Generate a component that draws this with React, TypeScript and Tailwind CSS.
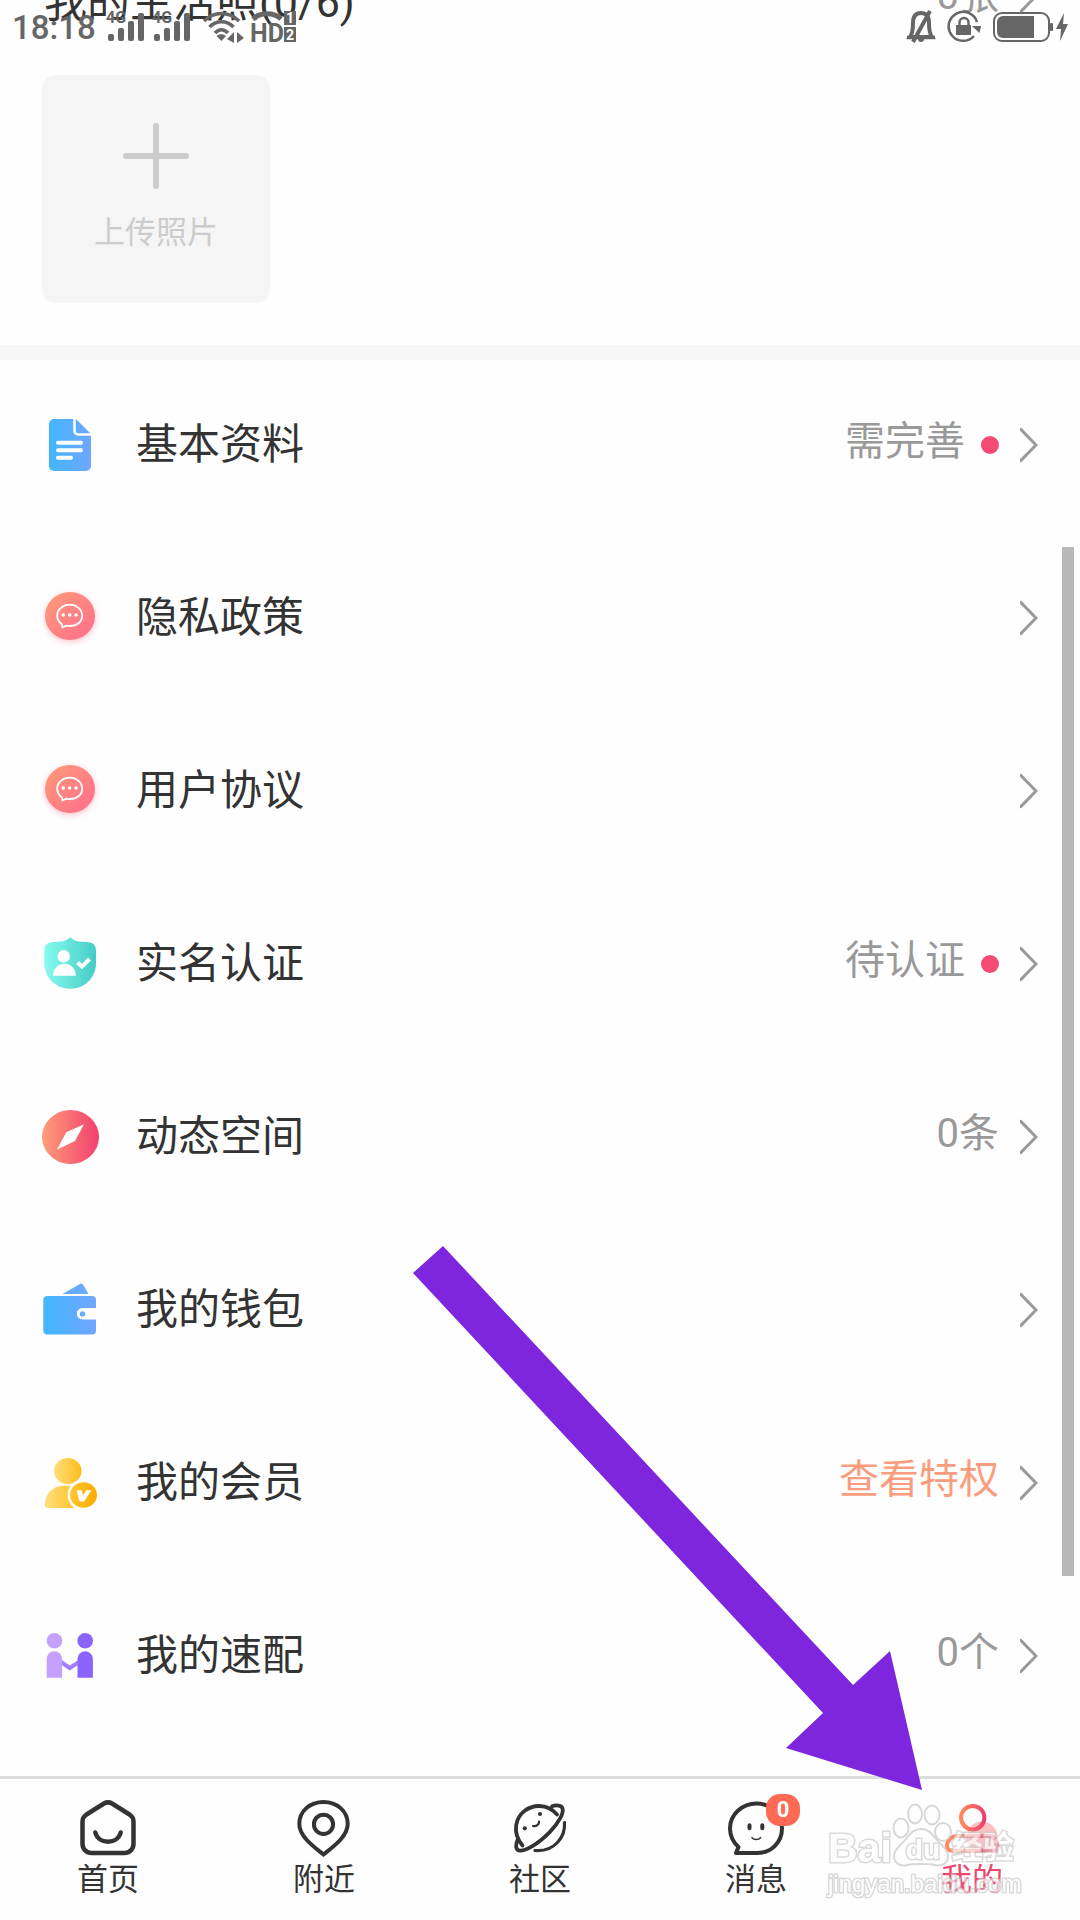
import type { ReactNode } from "react"

// ── Types ──────────────────────────────────────────────────────────────────
interface MenuItem {
  label: string
  icon: ReactNode
  value?: string
  dot?: boolean
  highlight?: boolean
}

interface TabItem {
  label: string
  icon: ReactNode
  badge?: number
  active?: boolean
}

function Gradient({ id, from, to, diagonal }: { id: string; from: string; to: string; diagonal?: boolean }) {
  return (
    <defs>
      <linearGradient id={id} x1="0" y1="0" x2="1" y2={diagonal ? "1" : "0"}>
        <stop offset="0" stopColor={from} />
        <stop offset="1" stopColor={to} />
      </linearGradient>
    </defs>
  )
}

// ── Menu icons ─────────────────────────────────────────────────────────────
function MenuSvg({ children }: { children: ReactNode }) {
  return (
    <svg viewBox="0 0 56 56" className="size-14 shrink-0 overflow-visible" fill="none" aria-hidden="true">
      {children}
    </svg>
  )
}

function DocIcon() {
  return (
    <MenuSvg>
      <Gradient id="doc" from="#41b7ff" to="#70a6ff" />
      <path d="M12 2H34L49 17V49a5 5 0 0 1-5 5H12a5 5 0 0 1-5-5V7a5 5 0 0 1 5-5Z" fill="url(#doc)" />
      <path d="M32.500 1V14a3.500 3.500 0 0 0 3.500 3.500H50" stroke="#fff" strokeWidth="2.500" />
      <path d="M16 25.700H39M16 33.300H39M16 40.700H29" stroke="#fff" strokeWidth="4" strokeLinecap="round" />
    </MenuSvg>
  )
}

function BubbleIcon({ id }: { id: string }) {
  return (
    <MenuSvg>
      <Gradient id={id} from="#ff9b78" to="#ff6c8d" diagonal />
      <ellipse cx="28" cy="26" rx="25" ry="24" fill={`url(#${id})`} className="drop-shadow-[0_2px_3px_rgba(255,110,130,0.4)]" />
      <path
        d="M20.500 37.500c-.2-1.600-.4-2.700-1-3.500-2.500-2-4.300-4.900-4.300-8.300 0-6.200 5.600-11 12.500-11s12.500 4.800 12.500 11-5.600 10.300-12.500 10.300c-1.400 0-2.300-.1-3.400-.4-1.100.4-2.400 1.200-3.800 1.900Z"
        stroke="#fff"
        strokeWidth="1.800"
        strokeLinejoin="round"
      />
      <g fill="#fff">
        <circle cx="21.300" cy="25" r="1.800" />
        <circle cx="27.700" cy="25" r="1.800" />
        <circle cx="34" cy="25" r="1.800" />
      </g>
    </MenuSvg>
  )
}

function ShieldIcon() {
  return (
    <MenuSvg>
      <Gradient id="shield" from="#86fbee" to="#45ccc6" />
      <path
        d="M28.300 1.200C31 3.500 33 5 37 5.500c4 .5 7 .3 10 .8 5 1 7 3.700 7 8.700V27c0 9-4 16-10.500 21-5 3.700-10 4.800-15.200 4.800S18 51.700 13 48C6.500 43 2.300 36 2.300 27V15c0-5 2-7.700 7-8.700 3-.5 6-.3 10-.8 4-.5 6.300-2 9-4.300Z"
        fill="url(#shield)"
      />
      <circle cx="21.700" cy="20.300" r="6.200" fill="#fff" />
      <path d="M11 39.800c0-7 4.500-12 11.400-12s11.400 5 11.400 12Z" fill="#fff" />
      <path d="M35.500 26.500 40 30.600 47.500 23" stroke="#fff" strokeWidth="4" />
    </MenuSvg>
  )
}

function CompassIcon() {
  return (
    <MenuSvg>
      <Gradient id="compass" from="#ff9d7b" to="#f23f6e" />
      <ellipse cx="28.500" cy="28" rx="28.500" ry="27" fill="url(#compass)" />
      <path d="M42 15.300 33 32 15 40.500 24.300 23.300Z" fill="#fff" />
    </MenuSvg>
  )
}

function WalletIcon() {
  return (
    <MenuSvg>
      <Gradient id="wallet" from="#41b7ff" to="#70a6ff" />
      <path d="M20.500 12 37.500 2.200c1.600-.8 3-.5 3.900 1L46.500 12Z" fill="#67abff" />
      <rect x="1.300" y="14" width="52.700" height="38.500" rx="4" fill="url(#wallet)" />
      <path d="M55 26H40.500a5.700 5.700 0 0 0 0 11.400H55Z" fill="#fff" />
      <circle cx="40.500" cy="31.900" r="2.700" fill="#67abff" />
    </MenuSvg>
  )
}

function MemberIcon() {
  return (
    <MenuSvg>
      <Gradient id="member" from="#ffe07c" to="#ffbb1d" />
      <Gradient id="vip" from="#ffc62e" to="#ffab00" />
      <path d="M2.700 50C2.700 39 11 30.800 22 30.800h9L40 53H6c-2.200 0-3.300-1-3.300-3Z" fill="url(#member)" />
      <ellipse cx="25.700" cy="16" rx="13.800" ry="13" fill="url(#member)" />
      <circle cx="41.500" cy="40" r="15.800" fill="#fff" />
      <ellipse cx="41.500" cy="40" rx="13.500" ry="12.800" fill="url(#vip)" />
      <path d="M34.500 35.300H39.500L41 40.500 44 35.300H49.500L42 46.500H37.500Z" fill="#fff" />
    </MenuSvg>
  )
}

function MatchIcon() {
  return (
    <MenuSvg>
      <path d="M19 34 27.700 40 37 34" stroke="#a37bff" strokeWidth="4" />
      <g fill="#c5a1ff">
        <circle cx="12.500" cy="12.700" r="7.800" />
        <path d="M4.700 49.700V31a7.700 7.700 0 0 1 15.400 0V49.700Z" />
      </g>
      <g fill="#8b64ff">
        <circle cx="43.200" cy="12.700" r="7.800" />
        <path d="M35.500 49.700V31a7.700 7.700 0 0 1 15.400 0V49.700Z" />
      </g>
    </MenuSvg>
  )
}

function Chevron() {
  return (
    <svg viewBox="0 0 18 36" className="h-9 w-[18px] shrink-0" fill="none" stroke="#999" strokeWidth="3" aria-hidden="true">
      <path d="M0 1.500 16 18 0 34.500" />
    </svg>
  )
}

// ── Tab bar icons ──────────────────────────────────────────────────────────
function TabSvg({ children }: { children: ReactNode }) {
  return (
    <svg
      viewBox="0 0 60 60"
      className="size-[60px]"
      fill="none"
      stroke="#333"
      strokeWidth="4"
      strokeLinecap="round"
      strokeLinejoin="round"
      aria-hidden="true"
    >
      {children}
    </svg>
  )
}

function HomeIcon() {
  return (
    <TabSvg>
      <path
        d="M26 5.500 8.500 16.500C5.500 18.500 4.500 20.500 4.500 23.500V46a9 9 0 0 0 9 9h33a9 9 0 0 0 9-9V23.500c0-3-1-5-4-7L34 5.500c-3-1.700-5-1.700-8 0Z"
        strokeWidth="4.500"
      />
      <path d="M17.300 34.500C20.500 46.800 39.500 46.800 42.700 34.500" strokeWidth="4.500" />
    </TabSvg>
  )
}

function PinIcon() {
  return (
    <TabSvg>
      <path d="M29.500 56.500C21 49.500 5.300 39 5.300 26 5.300 13 16 4 29.500 4S53.700 13 53.700 26c0 13-15.700 23.500-24.200 30.500Z" strokeLinejoin="miter" />
      <circle cx="29.500" cy="26.300" r="9.600" />
    </TabSvg>
  )
}

function PlanetIcon() {
  return (
    <TabSvg>
      <g strokeWidth="3.800">
        <path d="M12.500 47.500C7 41 5 35 6.200 27 8 15.500 18 7.800 29.500 8c7 .2 13 3.200 17.500 8.500" />
        <path d="M42 8.300c4.500-1.500 9.500-1 10.500 2 1.500 4.500-3.500 14.500-13 24C28 45.800 15.500 53.500 9 52.500 5.500 51.800 5.500 47 7.500 42" />
        <path d="M54.500 24.500C55.500 39 44.500 54 25 52.500" strokeWidth="3.200" />
      </g>
      <path d="M29 23.500c.3 3-2.500 5.300-6 4.500" strokeWidth="2.200" />
      <g fill="#333" stroke="none">
        <circle cx="30" cy="16" r="2.100" />
        <circle cx="14.800" cy="30.300" r="2.100" />
      </g>
    </TabSvg>
  )
}

function MessageIcon() {
  return (
    <TabSvg>
      <path d="M10 55H31C45.500 55 56 44 56 30.500S45 5.500 30.500 5.500 4 16.500 4 30.500C4 38.500 7.500 44.500 12.500 49Z" />
      <path d="M26 39.700c2 2.400 6.500 2.400 8.500 0" strokeWidth="1.600" />
      <path d="M23.500 27.200V30.300M36.300 27.200V30.300" />
    </TabSvg>
  )
}

function MeIcon() {
  return (
    <TabSvg>
      <Gradient id="me" from="#ff8a5c" to="#ee3e70" />
      <circle cx="40" cy="39" r="15.500" fill="#fdbfc0" stroke="none" />
      <g stroke="url(#me)">
        <circle cx="30.700" cy="19.700" r="11.700" />
        <path d="M16 38H45C52 38 55.500 42 55.500 48.500c0 3-1.500 4.300-4 4.300H10.500C6.500 52.800 5 50.500 5 47.500 5 42 9.500 38 16 38Z" />
      </g>
    </TabSvg>
  )
}

// ── Status bar ─────────────────────────────────────────────────────────────
function Signal() {
  return (
    <div className="relative h-8 w-10">
      <span className="absolute -top-0.5 -left-0.5 font-[Roboto] text-base leading-4 font-bold">4G</span>
      <svg viewBox="0 0 40 32" className="h-8 w-10" fill="currentColor" aria-hidden="true">
        <rect x="0" y="22" width="6" height="7" rx="2" />
        <rect x="10" y="16" width="6" height="13" rx="2" />
        <rect x="20" y="9" width="6" height="20" rx="2" />
        <rect x="30" y="1" width="6" height="28" rx="2" />
      </svg>
    </div>
  )
}

function StatusBar() {
  return (
    <div className="absolute inset-x-0 top-0 z-10 flex h-14 items-center justify-between px-3 text-[#666]">
      <div className="flex items-center">
        <span className="w-24 font-[Roboto] text-[33px] leading-10 font-medium">18:18</span>
        <Signal />
        <span className="w-[6px]" />
        <Signal />
        <svg viewBox="0 0 96 34" className="ml-2 h-[34px] w-24" fill="none" stroke="currentColor" strokeWidth="3.500" aria-hidden="true">
          <path d="M2 10C12 0 27 0 37 10M7.500 16C14 9 25 9 31.500 16M13 22C17 17.500 22 17.500 26 22" />
          <path d="M14.500 25 19.500 30 24 25C21 22.500 17.500 22.500 14.500 25Z" fill="currentColor" stroke="none" />
          <path d="M32 21V32L25 28ZM35 21 42 27 35 32Z" fill="currentColor" stroke="none" />
          <path d="M51 8C58 1 72 1 79 8" strokeWidth="5" />
          <text x="48" y="31" fill="currentColor" stroke="none" fontFamily="Roboto" fontSize="25" fontWeight="700">HD</text>
          <rect x="82" y="0" width="12" height="14" fill="currentColor" stroke="none" />
          <rect x="82" y="16" width="12" height="15" fill="currentColor" stroke="none" />
          <text x="84" y="12" fill="#fff" stroke="none" fontFamily="Roboto" fontSize="14" fontWeight="700">1</text>
          <text x="84" y="29" fill="#fff" stroke="none" fontFamily="Roboto" fontSize="14" fontWeight="700">2</text>
        </svg>
      </div>
      <svg viewBox="0 0 164 36" className="h-9 w-[164px]" fill="none" stroke="currentColor" aria-hidden="true">
        <path d="M3 27.500H31" strokeWidth="3.500" />
        <path d="M6 27C9 23 9 18 9 13 9 6 12 3 17 3S25 6 25 13c0 5 0 10 3 14Z" strokeWidth="4" />
        <path d="M26 1 9 32" strokeWidth="4" />
        <path d="M14 29H20a3 3 0 0 1-6 0Z" fill="currentColor" stroke="none" />
        <path d="M70 26A14.500 14.500 0 1 1 73 12" strokeWidth="2.500" />
        <path d="M68 16H77L75.500 23Z" fill="currentColor" stroke="none" />
        <rect x="52" y="15" width="15" height="10" fill="currentColor" stroke="none" />
        <path d="M55.500 16V12.500a4.500 4.500 0 0 1 9 0V16" strokeWidth="2.500" />
        <rect x="90" y="3" width="55" height="28" rx="8" strokeWidth="2" />
        <path d="M99 6H130V28H99a6 6 0 0 1-6-6V12a6 6 0 0 1 6-6Z" fill="currentColor" stroke="none" />
        <rect x="146" y="13" width="3" height="8" rx="1" fill="currentColor" stroke="none" />
        <path d="M160 3 152 19H157L156 31 164 14H159Z" fill="currentColor" stroke="none" />
      </svg>
    </div>
  )
}

// ── Overlays ───────────────────────────────────────────────────────────────
function PointerArrow() {
  return (
    <svg
      viewBox="0 0 510 544"
      className="pointer-events-none absolute right-[157px] bottom-[130px] z-20 h-[544px] w-[510px]"
      fill="#7d26dd"
      aria-hidden="true"
    >
      <path d="M30 0 440 439 477 405 509 544 373 502 410 467 0 27Z" />
    </svg>
  )
}

function Watermark() {
  const outline = "text-white [paint-order:stroke_fill] [-webkit-text-stroke:3px_#ccc]"
  return (
    <div className="pointer-events-none absolute right-[60px] bottom-5 z-20 w-48 font-['Liberation_Sans','Noto_Sans_CJK_SC',sans-serif] opacity-70">
      <div className="flex items-end">
        <span className={`text-[41px] leading-10 font-bold ${outline}`}>Bai</span>
        <div className="relative">
          <svg viewBox="0 0 60 66" className="h-[66px] w-[60px]" fill="#fff" stroke="#c8c8c8" strokeWidth="2" aria-hidden="true">
            <ellipse cx="9" cy="26" rx="7.500" ry="9.500" />
            <ellipse cx="23" cy="12" rx="7" ry="9.500" />
            <ellipse cx="40" cy="13" rx="7.500" ry="9.500" />
            <ellipse cx="51" cy="30" rx="8" ry="9" />
            <path d="M29 27c8 0 11 5 15 10s12 10 12 17c0 7-6 11-13 9-5-1-9-1-14-1s-9 0-14 1C8 65 2 61 2 54c0-7 8-12 12-17s7-10 15-10Z" />
          </svg>
          <span className={`absolute bottom-1 left-3.5 text-[28px] leading-7 font-bold ${outline}`}>du</span>
        </div>
        <span className={`text-[31px] leading-10 font-bold ${outline}`}>经验</span>
      </div>
      <p className={`text-2xl leading-8 ${outline}`}>jingyan.baidu.com</p>
    </div>
  )
}

// ── Page data ──────────────────────────────────────────────────────────────
const MENU: MenuItem[] = [
  { label: "基本资料", icon: <DocIcon />, value: "需完善", dot: true },
  { label: "隐私政策", icon: <BubbleIcon id="privacy" /> },
  { label: "用户协议", icon: <BubbleIcon id="terms" /> },
  { label: "实名认证", icon: <ShieldIcon />, value: "待认证", dot: true },
  { label: "动态空间", icon: <CompassIcon />, value: "0条" },
  { label: "我的钱包", icon: <WalletIcon /> },
  { label: "我的会员", icon: <MemberIcon />, value: "查看特权", highlight: true },
  { label: "我的速配", icon: <MatchIcon />, value: "0个" },
]

const TABS: TabItem[] = [
  { label: "首页", icon: <HomeIcon /> },
  { label: "附近", icon: <PinIcon /> },
  { label: "社区", icon: <PlanetIcon /> },
  { label: "消息", icon: <MessageIcon />, badge: 0 },
  { label: "我的", icon: <MeIcon />, active: true },
]

function MenuRow({ item }: { item: MenuItem }) {
  return (
    <li>
      <a href="#" className="flex h-[173px] items-center px-[42px] pb-1">
        {item.icon}
        <span className="ml-[38px] flex-1 text-[42px] leading-[60px] text-[#333]">{item.label}</span>
        {item.value && (
          <span className={`pb-1.5 text-[40px] leading-[60px] ${item.highlight ? "text-[#fa9d7e]" : "text-[#999]"}`}>
            {item.value}
          </span>
        )}
        {item.dot && <span className="ml-4 size-[18px] rounded-full bg-[#f44a74]" />}
        <span className="ml-[21px]">
          <Chevron />
        </span>
      </a>
    </li>
  )
}

// ── Main Component ─────────────────────────────────────────────────────────
export default function App() {
  return (
    <div
      lang="zh-CN"
      className="relative flex min-h-screen flex-col overflow-hidden bg-[#fefefe] font-[Roboto,'Noto_Sans_CJK_SC',sans-serif]"
    >
      <StatusBar />

      <main className="flex-1">
        {/* Photos */}
        <section className="border-b-[15px] border-[#f7f7f7] px-[42px] pb-[42px]">
          <div className="-mt-7 flex h-[103px] items-start justify-between">
            <h2 className="pl-0.5 text-[43px] leading-[60px] text-[#333]">我的生活照(0/6)</h2>
            <a href="#" className="flex items-center gap-[21px] text-[40px] leading-[48px] text-[#999]">
              0张
              <Chevron />
            </a>
          </div>
          <button type="button" className="flex size-[228px] flex-col items-center rounded-[14px] bg-[#f5f5f5] pt-12 text-[#ccc]">
            <svg viewBox="0 0 66 66" className="size-[66px]" stroke="currentColor" strokeWidth="6" strokeLinecap="round" aria-hidden="true">
              <path d="M33 3V63M3 33H63" />
            </svg>
            <span className="mt-[22px] text-[31px] leading-[44px]">上传照片</span>
          </button>
        </section>

        {/* Menu */}
        <ul>
          {MENU.map((item) => (
            <MenuRow key={item.label} item={item} />
          ))}
        </ul>
      </main>

      <div className="absolute top-[547px] right-[6px] h-[1029px] w-3 bg-[#b8b8b8]" />

      {/* Tab bar */}
      <nav className="flex h-36 border-t-[3px] border-[#ddd]">
        {TABS.map((tab) => (
          <a key={tab.label} href="#" className="flex flex-1 flex-col items-center pt-[19px]">
            <span className="relative">
              {tab.icon}
              {tab.badge !== undefined && (
                <span className="absolute -top-1 left-10 flex h-8 w-[34px] items-center justify-center rounded-[14px] bg-[#ff6a55] text-[22px] leading-8 font-bold text-white">
                  {tab.badge}
                </span>
              )}
            </span>
            <span className={`text-[31px] leading-[44px] ${tab.active ? "text-[#ec466f]" : "text-[#333]"}`}>{tab.label}</span>
          </a>
        ))}
      </nav>

      <Watermark />
      <PointerArrow />
    </div>
  )
}
